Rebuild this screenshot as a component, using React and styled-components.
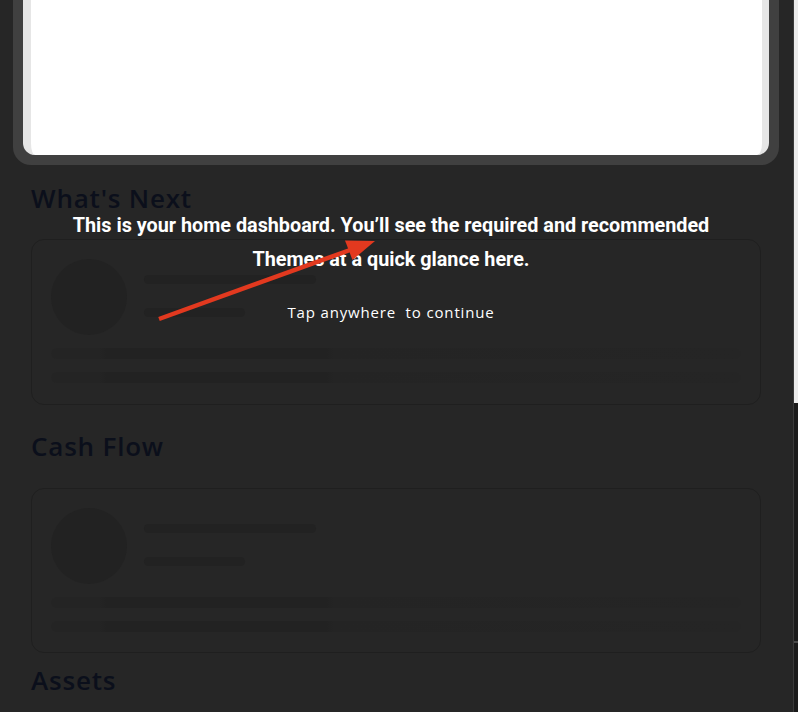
import React from 'react';
import styled, { createGlobalStyle } from 'styled-components';

const Global = createGlobalStyle`
  html, body { margin: 0; padding: 0; background: #262626; }
  body { width: 798px; height: 712px; overflow: hidden; }
`;

const Screen = styled.div`
  display: flex;
  width: 798px;
  height: 712px;
  overflow: hidden;
  background: #262626;
`;

const Main = styled.main`
  flex: 0 0 793px;
  display: flex;
  flex-direction: column;
  position: relative;
`;

const Scrollbar = styled.div`
  flex: 0 0 5px;
  display: flex;
  flex-direction: column;
  box-sizing: border-box;
  border-left: 1px solid #3a3a3a;
`;

const ScrollThumb = styled.div`
  height: 403px;
  background: #ececec;
`;

const ScrollTrack = styled.div`
  flex: 1;
  background: #1b1b1b;
  padding-top: 238px;
`;

const ScrollMark = styled.div`
  height: 2px;
  background: #4a4a4a;
`;

const HeroFrame = styled.section`
  margin: 0 14px 0 13px;
  height: 165px;
  box-sizing: border-box;
  padding: 0 10px 10px;
  background: #404040;
  border-radius: 0 0 18px 18px;
  display: flex;
`;

const HeroPanel = styled.div`
  flex: 1;
  background: #fff;
  border-left: 8px solid #e6e6e6;
  border-right: 7px solid #e6e6e6;
  border-radius: 0 0 12px 12px;
`;

const Content = styled.div`
  display: flex;
  flex-direction: column;
  padding: 0 32px 0 31px;
`;

const Heading = styled.h2`
  margin: ${p => p.$top}px 0 0;
  font-family: "Open Sans", "Noto Sans", sans-serif;
  font-weight: 600;
  font-size: 26px;
  letter-spacing: 0.8px;
  line-height: 30px;
  color: #0b0f1b;
`;

const Card = styled.div`
  margin-top: ${p => p.$top}px;
  height: ${p => p.$h}px;
  box-sizing: border-box;
  border: 1px solid #1f1f1f;
  border-radius: 13px;
  padding: 19px;
  display: flex;
  flex-direction: column;
`;

const CardTop = styled.div`
  display: flex;
  gap: 17px;
`;

const Avatar = styled.div`
  width: 76px;
  height: 76px;
  border-radius: 50%;
  background: #222222;
`;

const LineGroup = styled.div`
  display: flex;
  flex-direction: column;
  padding-top: 16px;
  gap: 24px;
`;

const ShortBar = styled.div`
  width: ${p => p.$w}px;
  height: 9px;
  border-radius: 5px;
  background: #222222;
`;

const CardBottom = styled.div`
  display: flex;
  flex-direction: column;
  margin-top: 13px;
  gap: 13px;
`;

const WideBar = styled.div`
  height: 11px;
  border-radius: 6px;
  background: linear-gradient(
    90deg,
    #242424 0%,
    #242424 7%,
    #222222 8%,
    #222222 40%,
    #242424 41%,
    #252525 100%
  );
`;

const Overlay = styled.div`
  position: absolute;
  inset: 0;
  display: flex;
  flex-direction: column;
  align-items: center;
  padding: 209px 11px 0 0;
  box-sizing: border-box;
`;

const Message = styled.p`
  margin: 0;
  font-family: Roboto, "Liberation Sans", sans-serif;
  font-weight: 700;
  font-size: 19.8px;
  line-height: 34px;
  color: #fff;
  text-align: center;
  width: 680px;
`;

const Hint = styled.p`
  margin: 25px 0 0;
  font-family: "Open Sans", "Noto Sans", sans-serif;
  font-weight: 400;
  font-size: 15px;
  line-height: 20px;
  letter-spacing: 0.85px;
  color: #fff;
  white-space: pre;
`;

const ArrowSvg = styled.svg`
  position: absolute;
  left: 0;
  top: 0;
  width: 793px;
  height: 712px;
`;

function SkeletonCard({ top, h }) {
  return (
    <Card $top={top} $h={h}>
      <CardTop>
        <Avatar />
        <LineGroup>
          <ShortBar $w={172} />
          <ShortBar $w={101} />
        </LineGroup>
      </CardTop>
      <CardBottom>
        <WideBar />
        <WideBar />
      </CardBottom>
    </Card>
  );
}

export default function App() {
  return (
    <>
      <Global />
      <Screen>
        <Main>
          <HeroFrame>
            <HeroPanel />
          </HeroFrame>
          <Content>
            <Heading $top={18}>What's Next</Heading>
            <SkeletonCard top={26} h={166} />
            <Heading $top={26}>Cash Flow</Heading>
            <SkeletonCard top={27} h={165} />
            <Heading $top={12}>Assets</Heading>
          </Content>
          <Overlay>
            <Message>
              This is your home dashboard. You’ll see the required and recommended Themes at a quick glance here.
            </Message>
            <Hint>{'Tap anywhere  to continue'}</Hint>
          </Overlay>
          <ArrowSvg viewBox="0 0 793 712">
            <line x1="159" y1="319" x2="350" y2="250" stroke="#e2391f" strokeWidth="4.5" />
            <polygon points="375,241 352.5,260 345,240.5" fill="#e2391f" />
          </ArrowSvg>
        </Main>
        <Scrollbar>
          <ScrollThumb />
          <ScrollTrack>
            <ScrollMark />
          </ScrollTrack>
        </Scrollbar>
      </Screen>
    </>
  );
}
